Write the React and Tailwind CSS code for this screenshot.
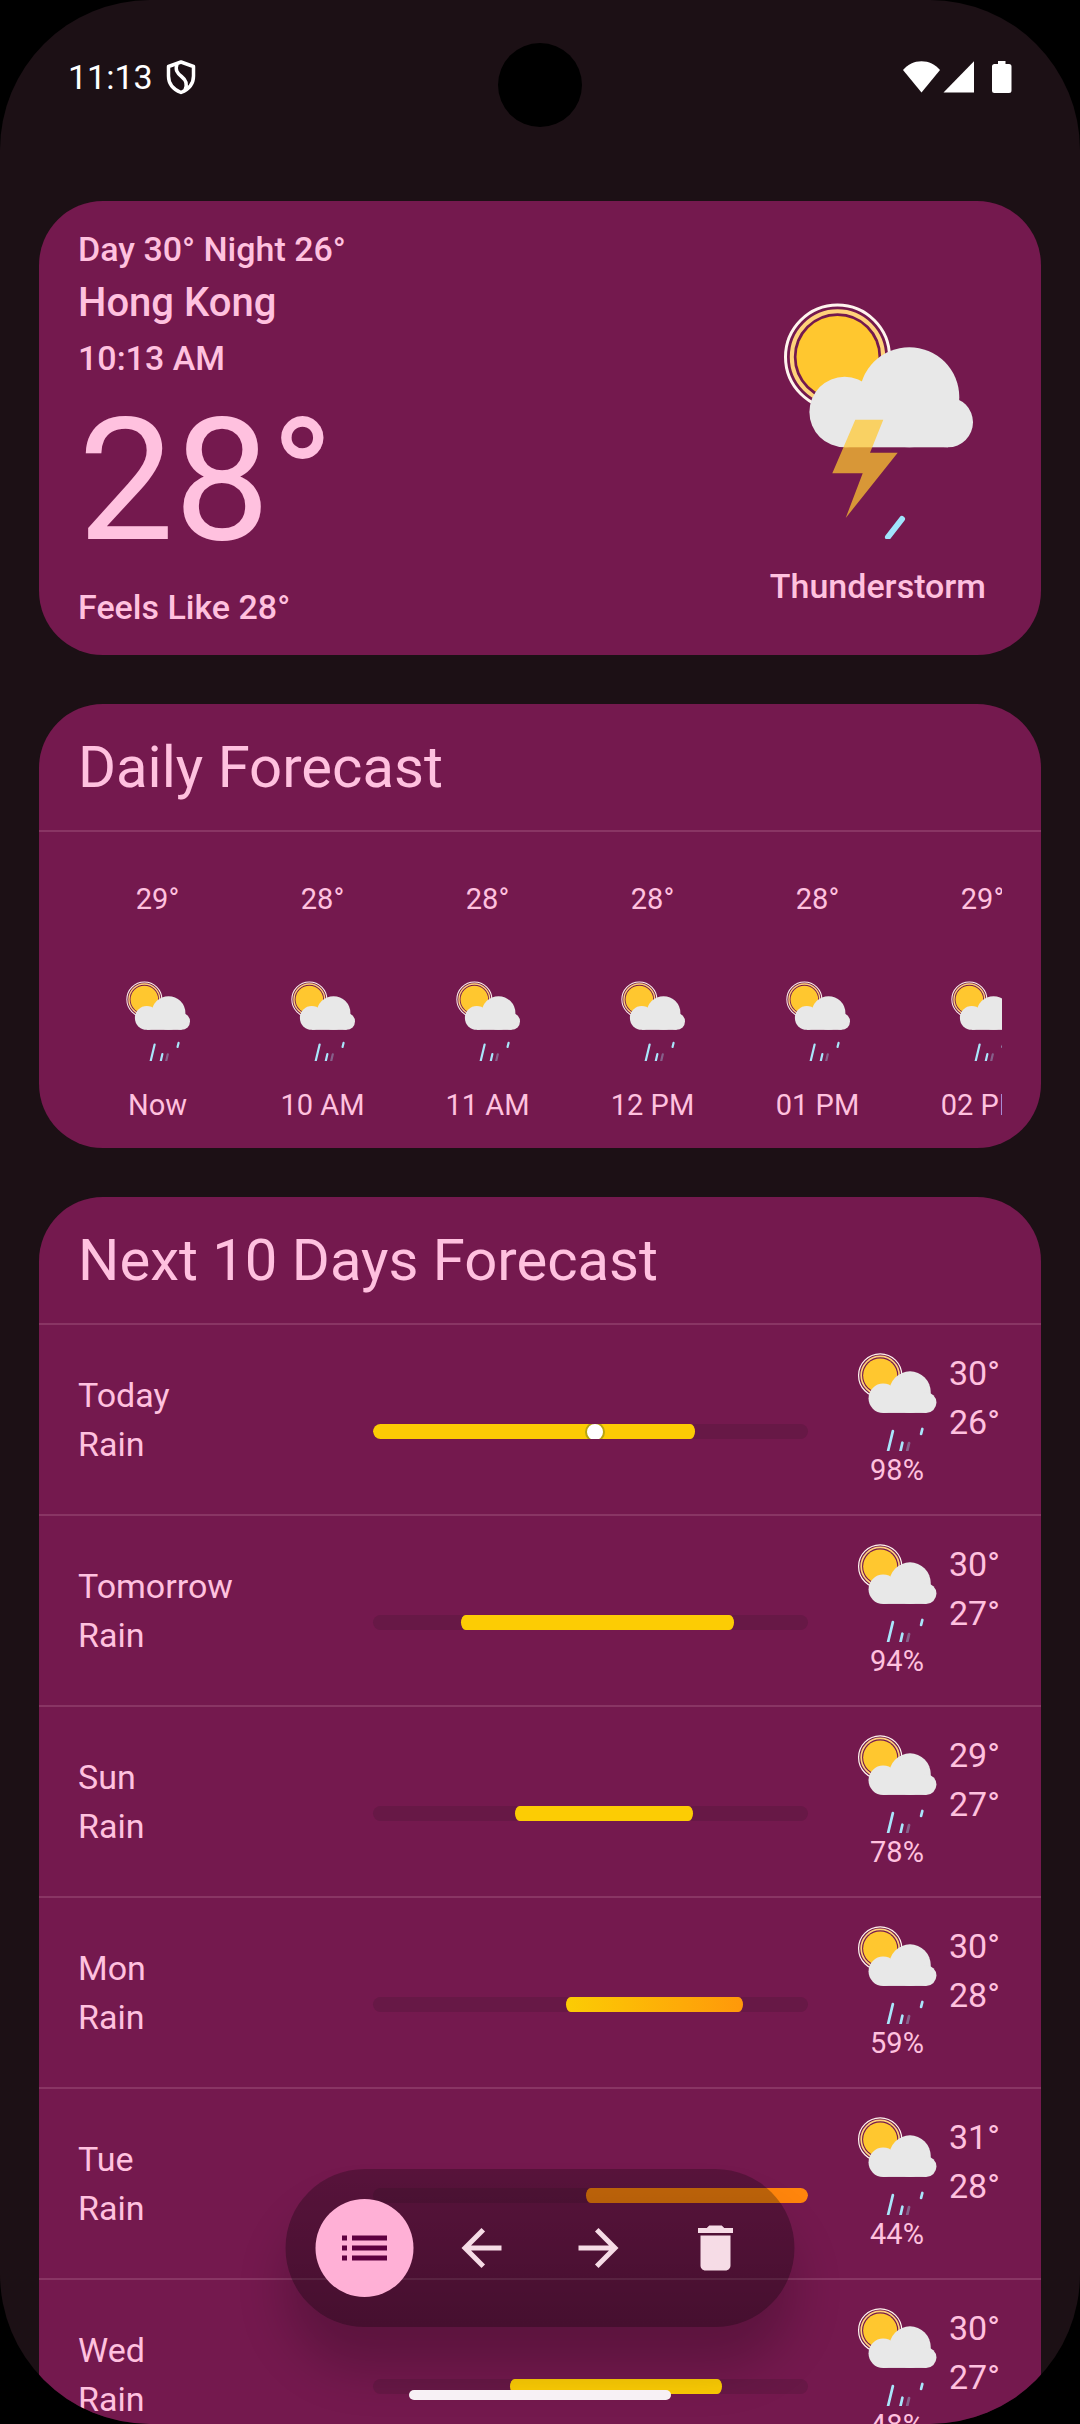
import React from "react";
import { MdArrowBack, MdArrowForward, MdDelete, MdList } from "react-icons/md";

const hours = [
  { temp: 29, label: "Now" },
  { temp: 28, label: "10 AM" },
  { temp: 28, label: "11 AM" },
  { temp: 28, label: "12 PM" },
  { temp: 28, label: "01 PM" },
  { temp: 29, label: "02 PM" },
];

const YELLOW = "#fccc04";

const days = [
  { day: "Today", text: "Rain", rain: 98, max: 30, min: 26, start: 0, end: 74, now: 51 },
  { day: "Tomorrow", text: "Rain", rain: 94, max: 30, min: 27, start: 20.3, end: 83 },
  { day: "Sun", text: "Rain", rain: 78, max: 29, min: 27, start: 32.7, end: 73.6 },
  { day: "Mon", text: "Rain", rain: 59, max: 30, min: 28, start: 44.4, end: 85.1, to: "#ff980a" },
  { day: "Tue", text: "Rain", rain: 44, max: 31, min: 28, start: 48.9, end: 100, from: "#ff850c", to: "#ff850c" },
  { day: "Wed", text: "Rain", rain: 48, max: 30, min: 27, start: 31.6, end: 80.3 },
];

const WeatherIcon = ({ className, storm }) => (
  <svg className={className} viewBox="0 0 190 236" fill="none" aria-hidden="true">
    <circle cx="54.5" cy="54" r="52" stroke="#fff4ee" strokeWidth="3" />
    <circle cx="54.5" cy="54" r="45.7" stroke="#ffd27a" strokeWidth="4" />
    <circle cx="54.5" cy="54" r="41" fill="#ffc72f" />
    <g fill="#e8e8e8">
      <circle cx="61.7" cy="109" r="35.3" />
      <circle cx="126.3" cy="94.2" r="50" />
      <circle cx="165" cy="119.3" r="25" />
      <rect x="61.7" y="100" width="103.3" height="44.3" />
    </g>
    {storm ? (
      <>
        <path
          d="M72.3 116.7h28L87 149.7h27.7L62.7 215l17-44.7H49.3z"
          fill="#ffc72f"
          fillOpacity="0.72"
        />
        <path d="M119 216L105 234" stroke="#a0e4fc" strokeWidth="6" strokeLinecap="round" />
      </>
    ) : (
      <g stroke="#a9e6fb" strokeWidth="6.5" strokeLinecap="round">
        <path d="M85 188L73 238" />
        <path d="M108 216L103 238" />
        <path d="M124 217L119 238" strokeOpacity="0.35" />
        <path d="M156 183L153 195" />
      </g>
    )}
  </svg>
);

const StatusBar = () => (
  <header className="relative flex h-[154px] shrink-0 items-center justify-between px-[68px] text-white">
    <div className="flex items-center gap-3">
      <span className="text-[34px] leading-10">11:13</span>
      <svg
        className="h-9 w-8"
        viewBox="0 0 32 36"
        fill="none"
        stroke="currentColor"
        strokeWidth="3.5"
        aria-hidden="true"
      >
        <path
          d="M16 3L28.5 7.5v9.5c0 8-5 13.5-12.5 16.5C8.5 30.5 3.5 25 3.5 17V7.5z"
          strokeLinejoin="round"
        />
        <path d="M12 5c-2 6 0 9 4.5 12.5S23 25 20 31" />
      </svg>
    </div>
    <div className="absolute top-[43px] left-1/2 size-[84px] -translate-x-1/2 rounded-full bg-black" />
    <svg className="h-8 w-[110px]" viewBox="0 0 110 32" fill="currentColor" aria-hidden="true">
      <path d="M19.5 31.5L1 9C6 3.5 12 .3 19.5 .3S33 3.5 38 9z" />
      <path d="M41.5 31.5H72V.3z" />
      <path d="M96 0h7.5v3h3.5a2.5 2.5 0 0 1 2.5 2.5v24a2.5 2.5 0 0 1-2.5 2.5H92.5a2.5 2.5 0 0 1-2.5-2.5v-24A2.5 2.5 0 0 1 92.5 3H96z" />
    </svg>
  </header>
);

const CardTitle = ({ children }) => (
  <h2 className="flex h-[126px] items-center px-[39px] text-[58px] leading-[72px]">
    {children}
  </h2>
);

const CurrentWeather = () => (
  <section className="flex justify-between rounded-[64px] bg-[#74194e] px-[39px] pt-[23px] pb-[19px] text-[34px] font-medium">
    <div>
      <p className="leading-[50px]">Day 30° Night 26°</p>
      <h1 className="text-[40px] leading-[58px]">Hong Kong</h1>
      <p className="leading-[52px]">10:13 AM</p>
      <p className="text-[171px] leading-[194px] font-normal">28°</p>
      <p className="leading-[58px]">Feels Like 28°</p>
    </div>
    <div className="flex flex-col items-center justify-end pr-4 pb-[25px]">
      <WeatherIcon className="h-[236px] w-[190px]" storm />
      <p className="mt-[22px] leading-[50px]">Thunderstorm</p>
    </div>
  </section>
);

const HourlyForecast = () => (
  <section className="rounded-[64px] bg-[#74194e]">
    <CardTitle>Daily Forecast</CardTitle>
    <div className="border-t-2 border-[#893564] pt-12 pr-[39px] pb-6 pl-9">
      <ul className="flex overflow-x-auto text-[29px] leading-[38px] [scrollbar-width:none]">
        {hours.map((hour) => (
          <li key={hour.label} className="flex w-[165px] shrink-0 flex-col items-center">
            <span>{hour.temp}°</span>
            <WeatherIcon className="mt-[63px] mb-[25px] h-20 w-16" />
            <span>{hour.label}</span>
          </li>
        ))}
      </ul>
    </div>
  </section>
);

const TempBar = ({ start, end, now, from = YELLOW, to = YELLOW }) => (
  <div className="relative h-[15px] overflow-hidden rounded-full bg-[#671846]">
    <div
      className="absolute inset-y-0 rounded-[5px/8px]"
      style={{
        left: `${start}%`,
        width: `${end - start}%`,
        backgroundImage: `linear-gradient(to right, ${from}, ${to})`,
      }}
    />
    {now && (
      <div
        className="absolute top-1/2 size-5 -translate-1/2 rounded-full border-2 border-[#b8a410] bg-white"
        style={{ left: `${now}%` }}
      />
    )}
  </div>
);

const DayRow = ({ item }) => (
  <li className="flex border-t-2 border-[#893564] px-[39px] py-6">
    <div className="w-[295px] self-center text-[34px] leading-[49px]">
      <p>{item.day}</p>
      <p>{item.text}</p>
    </div>
    <div className="flex-1 self-center pt-6">
      <TempBar {...item} />
    </div>
    <div className="ml-[49px] flex w-20 flex-col items-center pt-1">
      <WeatherIcon className="h-[98px] w-20" />
      <span className="mb-px text-[29px] leading-[38px]">{item.rain}%</span>
    </div>
    <div className="ml-3 w-[53px] text-[34px] leading-[49px]">
      <p>{item.max}°</p>
      <p>{item.min}°</p>
    </div>
  </li>
);

const DaysForecast = () => (
  <section className="rounded-[64px] bg-[#74194e]">
    <CardTitle>Next 10 Days Forecast</CardTitle>
    <ul>
      {days.map((item) => (
        <DayRow key={item.day} item={item} />
      ))}
    </ul>
  </section>
);

const navButton = "flex size-[98px] items-center justify-center rounded-full";

const BottomNav = () => (
  <nav className="absolute bottom-[97px] left-1/2 flex -translate-x-1/2 gap-[19px] rounded-full bg-linear-to-b from-black/25 to-black/40 px-[30px] py-[30px] text-[60px] text-[#f6dce6] shadow-[0_42px_50px_rgba(0,0,0,0.2)]">
    <button
      type="button"
      aria-label="Forecast list"
      className={`${navButton} bg-[#ffb0d6] text-[#5e0040]`}
    >
      <MdList />
    </button>
    <button type="button" aria-label="Previous city" className={navButton}>
      <MdArrowBack />
    </button>
    <button type="button" aria-label="Next city" className={navButton}>
      <MdArrowForward />
    </button>
    <button type="button" aria-label="Delete city" className={navButton}>
      <MdDelete />
    </button>
  </nav>
);

const App = () => {
  return (
    <div className="h-screen bg-black font-[Roboto,sans-serif]">
      <div className="relative flex h-full flex-col overflow-hidden rounded-[150px] bg-[#1c1015] text-[#ffc1df]">
        <StatusBar />
        <main className="flex min-h-0 flex-1 flex-col gap-[49px] overflow-y-auto px-[39px] pt-[47px] [scrollbar-width:none]">
          <CurrentWeather />
          <HourlyForecast />
          <DaysForecast />
        </main>
        <BottomNav />
        <div className="absolute bottom-6 left-1/2 h-[10px] w-[262px] -translate-x-1/2 rounded-full bg-[#f7f1f5]" />
      </div>
    </div>
  );
};

export default App;
